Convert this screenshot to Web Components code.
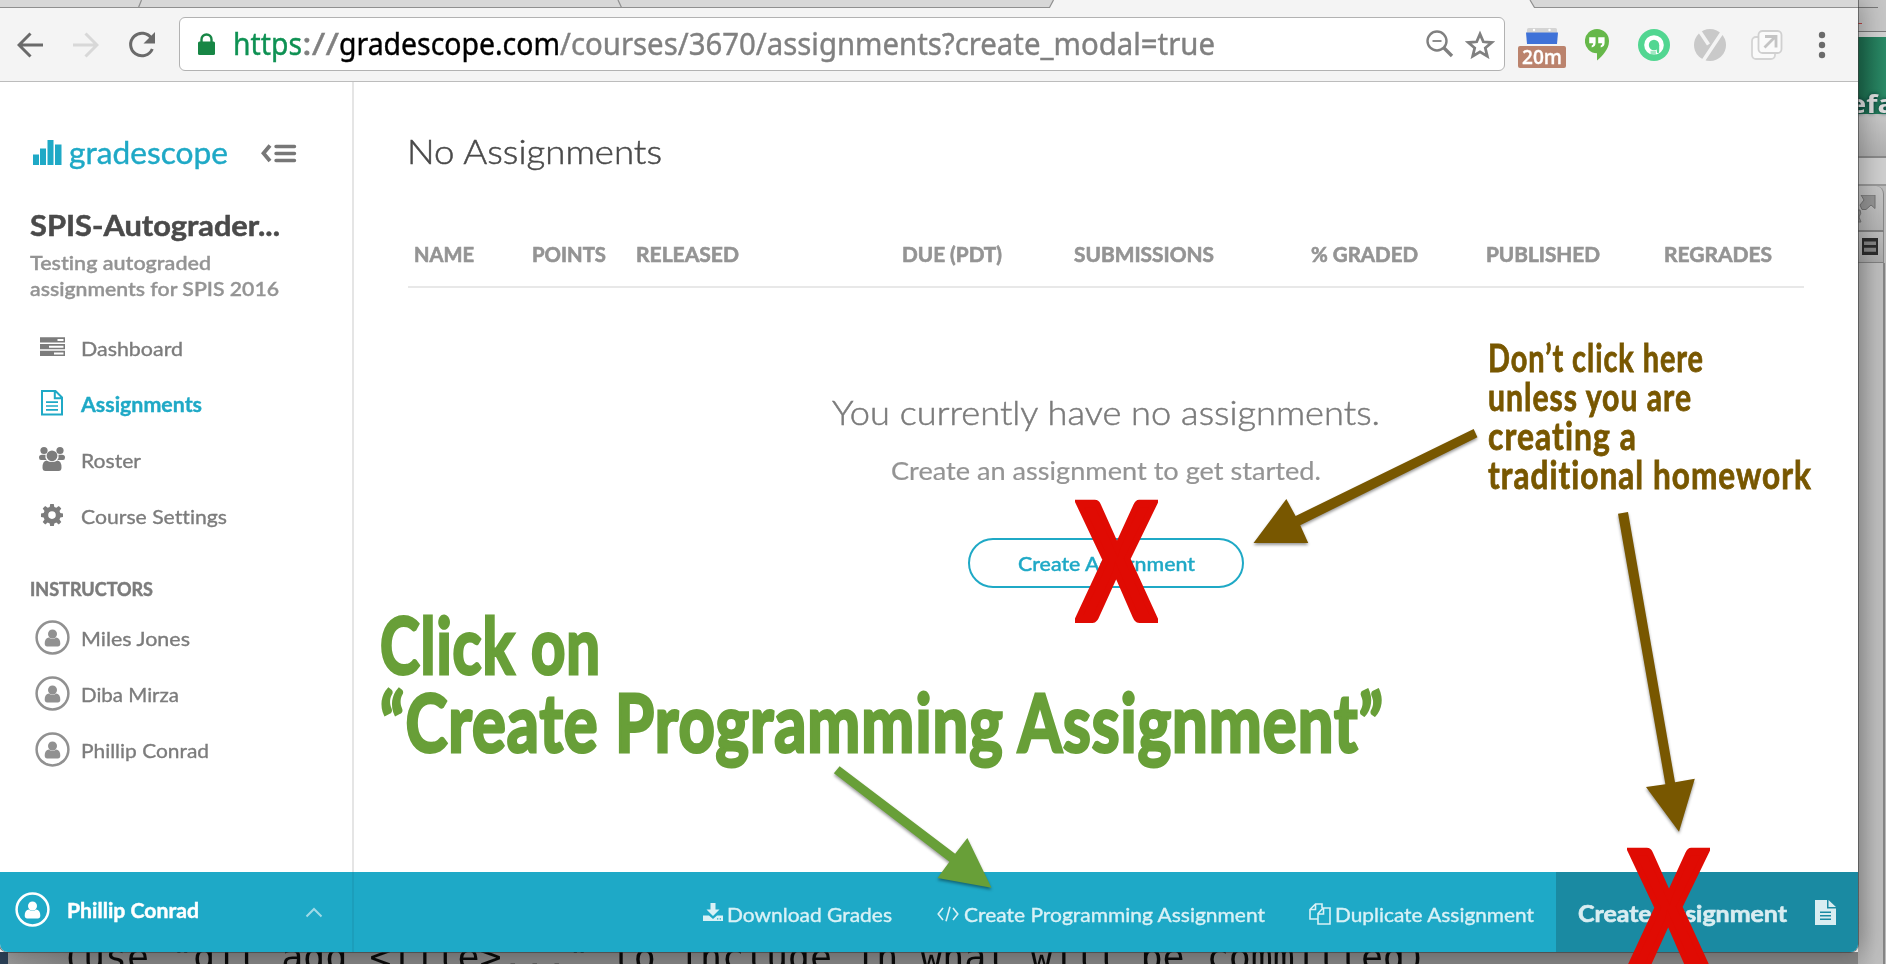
<!DOCTYPE html>
<html lang="en">
<head>
<meta charset="utf-8">
<title>Gradescope – Assignments</title>
<style>
html, body { margin: 0; padding: 0; }
body { font-family: Lato, "Open Sans", sans-serif; overflow: hidden; }
</style>
</head>
<body>
<desk-top></desk-top>
<script>
const define = (name, html, setup) => customElements.define(name, class extends HTMLElement {
  constructor() { super(); this.attachShadow({ mode: 'open' }); }
  connectedCallback() {
    this.shadowRoot.innerHTML = html;
    if (setup) setup.call(this, this.shadowRoot);
  }
});

/* One line of text set to an exact width: w = width, s = font size, b = weight */
define('fit-text', `
<style>
:host { display: flex; flex: none; line-height: 1; white-space: pre; font-variant-ligatures: none; }
span { flex: none; transform-origin: 0 50%; line-height: 1; }
</style><span><slot></slot></span>`, function (root) {
  const span = root.querySelector('span');
  this.style.fontSize = this.getAttribute('s') + 'px';
  this.style.height = this.getAttribute('s') + 'px';
  if (this.hasAttribute('b')) this.style.fontWeight = this.getAttribute('b');
  const w = +this.getAttribute('w');
  const own = span.offsetWidth ? span.getBoundingClientRect().width : w;
  this.style.width = w + 'px';
  span.style.transform = 'scaleX(' + (w / own) + ')';
});

const ICONS = {
  back: [26, 26, '<path d="M13.5 1.5 2 13l11.500 11.500M2 13h24" fill="none" stroke="currentColor" stroke-width="3"/>'],
  forward: [26, 26, '<path d="M12.500 1.500 24 13 12.500 24.500M24 13H0" fill="none" stroke="currentColor" stroke-width="3"/>'],
  reload: [28, 28, '<path d="M23.500 7.500A11.300 11.300 0 1 0 24.300 18" fill="none" stroke="currentColor" stroke-width="3"/><path d="M27 1v11.500H15.500z" fill="currentColor"/>'],
  lock: [17, 22, '<rect x="0" y="8.500" width="17" height="13.500" rx="1.500" fill="currentColor"/><path d="M3.500 10V6.500a5 5 0 0 1 10 0V10" fill="none" stroke="currentColor" stroke-width="2.400"/>'],
  zoomout: [28, 28, '<circle cx="11" cy="11" r="9.500" fill="none" stroke="currentColor" stroke-width="2.400"/><path d="M6.500 11h9" stroke="currentColor" stroke-width="1.800"/><path d="M17.500 17.500l8.500 8.500" stroke="currentColor" stroke-width="3.400"/>'],
  star: [30, 29, '<path d="M15 4l3.300 7.800 8.400.7-6.400 5.500 2 8.200L15 21.800l-7.300 4.400 2-8.200-6.400-5.500 8.400-.7z" fill="none" stroke="currentColor" stroke-width="2.800"/>'],
  hangouts: [24, 32, '<path d="M12 0a12 12 0 0 1 12 12.200c0 8-6.500 14.500-12 19.300v-7.300A12 12 0 0 1 12 0z" fill="#66b84a"/><path d="M4.200 8.300h6.400v5.500q0 4-3.900 4.600v-2q1.500-.5 1.500-2.200H4.200zM13.200 8.300h6.400v5.500q0 4-3.900 4.600v-2q1.500-.5 1.500-2.200h-4z" fill="#fff"/>'],
  ring: [32, 32, '<circle cx="16" cy="16" r="16" fill="#52d691"/><circle cx="16" cy="16" r="9.800" fill="#fff"/><circle cx="16" cy="16" r="5.200" fill="#52d691"/><path d="M18.800 16h2.400v6q0 1.700-1 2.400-1.400-.2-1.400-2.400z" fill="#52d691"/><path d="M12.500 21.800h5.400v4h-5.400z" fill="#52d691" opacity=".55"/>'],
  fork: [32, 32, '<circle cx="16" cy="16" r="16" fill="#c9c9c9"/><path d="M5.500 2l9 13.500M28 3.500 9 32" stroke="#f4f4f4" stroke-width="3.600"/>'],
  share: [32, 30, '<rect x="1" y="7" width="23" height="22" rx="4" fill="#fafafa" stroke="#d4d4d4" stroke-width="1.800"/><rect x="7.500" y="1" width="23" height="22" rx="4" fill="#fafafa" stroke="#d0d0d0" stroke-width="1.800"/><path d="M13.500 17.500 23.500 7.500M14 6.500h11v11" fill="none" stroke="#c4c4c4" stroke-width="2.800"/>'],
  dots: [8, 28, '<g fill="#6a6a6a"><circle cx="4" cy="4" r="3.200"/><circle cx="4" cy="14" r="3.200"/><circle cx="4" cy="24" r="3.200"/></g>'],
  calendar: [32, 17, '<rect x="1" y="0" width="30" height="6" rx="1.500" fill="#d4d4d4"/><circle cx="8" cy="2" r="1.200" fill="#fff"/><circle cx="23.500" cy="2" r="1.200" fill="#fff"/><path d="M0 4.500h32L31 16H1z" fill="#3f72d8"/>'],
  bars: [29, 25, '<path fill="currentColor" d="M0 14.500h6V25H0zM7 8.500h6V25H7zM14.500 0h6v25h-6zM22 4.500h6.500V25H22z"/>'],
  collapse: [36, 20, '<path d="M9 2.500 2.500 10.300 9 18" fill="none" stroke="currentColor" stroke-width="3.800"/><path d="M15 3.500h18.500M15 10.500h18.500M15 17.500h18.500" stroke="currentColor" stroke-width="3.400" stroke-linecap="round"/>'],
  tasks: [25, 19, '<path fill="currentColor" fill-rule="evenodd" d="M0 .2h25v5.300H0zM17.500 2v2h6V2zM0 7h25v5.300H0zM9 8.700v2h14.500v-2zM0 13.700h25v5.300H0zM14 15.500v2h9.500v-2z"/>'],
  fileo: [22, 26, '<path d="M1 1h13.500L21 7.500V24.500H1zM13.800 1v7.200H21" fill="none" stroke="currentColor" stroke-width="2"/><path d="M5 12.200h12M5 16h12M5 19.800h12" stroke="currentColor" stroke-width="1.700"/>'],
  users: [26, 26, '<g fill="currentColor"><circle cx="5" cy="4.500" r="3.600"/><circle cx="21" cy="4.500" r="3.600"/><circle cx="13" cy="9.800" r="5.400"/><path d="M3 8.700h3.500a6.500 6.500 0 0 0 1.200 5.400H2Q0 14 0 11.500 0 8.700 3 8.700zM23 8.700h-3.500a6.500 6.500 0 0 1-1.200 5.400H24q2-.1 2-2.600 0-2.800-3-2.800zM7.500 14.500q5.500 3 11 0 4 .5 4 7 0 3.500-3 3.500h-13q-3 0-3-3.500 0-6.500 4-7z"/></g>'],
  gear: [22, 22, '<path fill="currentColor" fill-rule="evenodd" d="M9.200 0h3.600l.5 3 2 .8 2.500-1.800 2.500 2.500-1.800 2.500.8 2 2.900.5v3.400l-2.900.5-.8 2 1.800 2.500-2.500 2.500-2.500-1.800-2 .8-.5 2.900H9.200l-.5-2.900-2-.8-2.500 1.800-2.500-2.500 1.800-2.500-.8-2L0 12.900V9.500L2.700 9l.8-2-1.800-2.500L4.200 2l2.500 1.800 2-.8zM11 7.300a3.800 3.800 0 1 0 0 7.600 3.800 3.800 0 0 0 0-7.600z"/>'],
  avatar: [35, 35, '<circle cx="17.500" cy="17.500" r="15.900" fill="none" stroke="currentColor" stroke-width="2.500"/><circle cx="17.500" cy="14" r="4.500" fill="currentColor"/><path fill="currentColor" d="M13.500 17.400q4 2.800 8 0 3.800.8 3.800 6 0 3-2.500 3H12.200q-2.500 0-2.500-3 0-5.200 3.800-6z"/>'],
  caret: [18, 11, '<path d="M1.500 9.500 9 2l7.500 7.500" fill="none" stroke="currentColor" stroke-width="2"/>'],
  download: [20, 19, '<path fill="currentColor" fill-rule="evenodd" d="M7.500 0h5v6.500h4L10 13 3.500 6.500h4zM0 12.500h6L10 16l4-3.500h6V18H0zM14 15.300v1.200h1.300v-1.200zM16.700 15.300v1.200H18v-1.200z"/>'],
  code: [22, 16, '<path d="M6 2 1.200 8 6 14M16 2l4.800 6L16 14M13 .8 9 15.200" fill="none" stroke="currentColor" stroke-width="1.600"/>'],
  files: [22, 22, '<path d="M13 5V1H6.500L1 6.500V16h7.500M6.500 1v5.500H1M21 21H9V10.500L14 5h7zM14.500 5v6H9" fill="none" stroke="currentColor" stroke-width="1.600"/>'],
  file: [21, 25, '<path fill="currentColor" fill-rule="evenodd" d="M0 0h12v8.500h9V25H0zM13.500 0 21 7h-7.500zM5 11.500V13h11v-1.500zM5 15v1.500h11V15zM5 18.500V20h11v-1.500z"/>'],
  expand: [22, 32, '<path d="M3 0h14v13.500l-4-3.500-5 4.500H4L2 10l4-5z" fill="#959595" stroke="#747474"/><path d="M-2 15l4 0q2 3-1 7l2 5H-4" fill="#959595" stroke="#747474"/>'],
  list: [16, 17, '<rect width="16" height="17" fill="#2c2c2c"/><path d="M2 3.500h12v3.500H2zM2 9.800h12v4H2z" fill="#858585"/>']
};
customElements.define('ui-icon', class extends HTMLElement {
  constructor() { super(); this.attachShadow({ mode: 'open' }); }
  connectedCallback() {
    const [w, h, body] = ICONS[this.getAttribute('name')];
    this.shadowRoot.innerHTML = `<style>:host{display:block;flex:none;width:${w}px;height:${h}px}svg{display:block}</style>
<svg width="${w}" height="${h}" viewBox="0 0 ${w} ${h}">${body}</svg>`;
  }
});

define('tab-strip', `
<style>
:host { display: block; height: 8px; background: #f4f4f4; }
svg { display: block; }
</style>
<svg width="1858" height="8"><path d="M0 0H1053.500L1049.500 7H0zM1530 0l4.500 7H1858V0z" fill="#d7d7d7"/>
<path d="M0 7.500H1049.500L1053.500 0M1530 0l4.500 7.500H1858M138.500 7.500 141.500 0M618 0l3.500 7.500" fill="none" stroke="#8f8f8f" stroke-width="1.200"/></svg>`);

define('browser-toolbar', `
<style>
:host { display: flex; align-items: center; height: 73px; background: #f4f4f4; border-bottom: 1px solid #bcbcbc; color: #6a6a6a; box-sizing: content-box; }
.nav { display: flex; align-items: center; width: 162px; padding-left: 17px; }
.fwd { color: #d8d8d8; margin-left: 30px; }
.rl { margin-left: 29px; }
.omni { display: flex; align-items: center; box-sizing: border-box; width: 1326px; height: 54px; margin-bottom: 1px; background: #fff; border: 1px solid #b2b2b2; border-radius: 6px; padding: 0 9px 0 18px; font-family: "Noto Sans", sans-serif; color: #808080; }
.lock { color: #178645; margin-right: 18px; }
.omni fit-text { -webkit-text-stroke: .4px currentColor; }
.s { color: #0e9153; } .d { color: #000; }
.z { margin-left: auto; } .st { margin-left: 11px; }
.ext { display: flex; align-items: center; margin-left: 13px; }
.cal { width: 48px; height: 40px; display: flex; flex-direction: column; align-items: center; margin-top: 7px; }
.badge { box-sizing: border-box; width: 48px; height: 22px; margin-top: 1px; border-radius: 2px; background: #bb836d; color: #fff; font-family: "Open Sans", sans-serif; padding: 1px 0 0 4px; -webkit-text-stroke: .3px currentColor; }
</style>
<div class="nav"><ui-icon name="back"></ui-icon><ui-icon class="fwd" name="forward"></ui-icon><ui-icon class="rl" name="reload"></ui-icon></div>
<div class="omni"><ui-icon class="lock" name="lock"></ui-icon>
<fit-text class="s" s="30" w="69">https</fit-text><fit-text s="30" w="37">://</fit-text><fit-text class="d" s="30" w="221">gradescope.com</fit-text><fit-text s="30" w="655">/courses/3670/assignments?create_modal=true</fit-text>
<ui-icon class="z" name="zoomout"></ui-icon><ui-icon class="st" name="star"></ui-icon></div>
<div class="ext"><div class="cal"><ui-icon name="calendar"></ui-icon><div class="badge"><fit-text s="20" w="40" b="600">20m</fit-text></div></div>
<ui-icon name="hangouts" style="margin-left:19px"></ui-icon><ui-icon name="ring" style="margin-left:29px"></ui-icon><ui-icon name="fork" style="margin-left:24px"></ui-icon><ui-icon name="share" style="margin-left:25px"></ui-icon><ui-icon name="dots" style="margin-left:35px"></ui-icon></div>`);

/* Sidebar row: fixed icon column and a label */
define('nav-item', `
<style>
:host { display: flex; align-items: center; height: 56px; color: #7c7c7c; -webkit-text-stroke: .35px currentColor; }
:host([active]) { color: #1fa9c6; }
.i { width: 50px; display: flex; justify-content: center; margin-left: -3px; padding-bottom: 3px; }
.i ui-icon { color: inherit; }
:host([person]) .i { color: #919191; padding-bottom: 1px; }
.t { margin-left: 4px; }
</style><div class="i"></div><div class="t"><slot></slot></div>`, function (root) {
  root.querySelector('.i').innerHTML = `<ui-icon name="${this.getAttribute('icon')}"></ui-icon>`;
});

define('course-sidebar', `
<style>
:host { display: block; box-sizing: border-box; width: 354px; border-right: 2px solid #e5e5e5; padding: 50px 0 0 30px; color: #7c7c7c; }
.logo { display: flex; align-items: center; height: 40px; color: #1fa9c6; -webkit-text-stroke: .4px currentColor; }
.logo ui-icon { margin: 1px 0 0 3px; }
.logo .c { color: #777; margin: 2px 0 0 33px; }
.title { margin-top: 33px; height: 40px; display: flex; align-items: center; color: #4a4a4a; -webkit-text-stroke: .5px currentColor; }
.sub { margin: 4px 0 19px; color: #949494; -webkit-text-stroke: .3px currentColor; }
.sub fit-text { padding: 4px 0 3px; height: 19px !important; }
.h { height: 42px; padding-top: 24px; display: flex; align-items: center; -webkit-text-stroke: .5px currentColor; }
</style>
<div class="logo"><ui-icon name="bars"></ui-icon><fit-text style="margin-left:7px" s="31" w="159">gradescope</fit-text><ui-icon class="c" name="collapse"></ui-icon></div>
<div class="title"><fit-text s="28" w="250" b="700">SPIS-Autograder...</fit-text></div>
<div class="sub"><fit-text s="19" w="181" b="600">Testing autograded</fit-text><fit-text s="19" w="249" b="600">assignments for SPIS 2016</fit-text></div>
<nav-item icon="tasks"><fit-text s="20" w="102">Dashboard</fit-text></nav-item>
<nav-item icon="fileo" active><fit-text s="20" w="121" b="700">Assignments</fit-text></nav-item>
<nav-item icon="users"><fit-text s="20" w="60">Roster</fit-text></nav-item>
<nav-item icon="gear"><fit-text s="20" w="146">Course Settings</fit-text></nav-item>
<div class="h"><fit-text s="18" w="123" b="700">INSTRUCTORS</fit-text></div>
<nav-item person icon="avatar"><fit-text s="20" w="109">Miles Jones</fit-text></nav-item>
<nav-item person icon="avatar"><fit-text s="20" w="98">Diba Mirza</fit-text></nav-item>
<nav-item person icon="avatar"><fit-text s="20" w="128">Phillip Conrad</fit-text></nav-item>`);

define('pill-button', `
<style>:host { display: flex; align-items: center; justify-content: center; box-sizing: border-box; width: 276px; height: 50px; border: 2px solid #1fa9c6; border-radius: 25px; color: #1fa9c6; -webkit-text-stroke: .4px currentColor; padding-bottom: 1px; }</style><slot></slot>`);

define('assignments-page', `
<style>
:host { display: block; flex: 1; padding: 49px 54px 0; }
.h1 { height: 40px; display: flex; align-items: center; color: #4a4a4a; margin-left: -1px; -webkit-text-stroke: .5px currentColor; }
.thead { display: grid; grid-template-columns: 118px 104px 266px 172px 237px 175px 178px 1fr; align-items: center; height: 64px; padding-left: 6px; margin-top: 51px; border-bottom: 2px solid #e8e8e8; color: #949494; -webkit-text-stroke: .6px currentColor; }
.empty { display: flex; flex-direction: column; align-items: center; padding-top: 104px; }
.a { height: 40px; display: flex; align-items: center; color: #7b7b7b; -webkit-text-stroke: .5px currentColor; }
.b { height: 40px; display: flex; align-items: center; color: #949494; margin: 18px 0 48px; -webkit-text-stroke: .2px currentColor; }
</style>
<div class="h1"><fit-text s="34" w="255" b="300">No Assignments</fit-text></div>
<div class="thead"><fit-text s="20" w="60" b="700">NAME</fit-text><fit-text s="20" w="74" b="700">POINTS</fit-text><fit-text s="20" w="103" b="700">RELEASED</fit-text><fit-text s="20" w="100" b="700">DUE (PDT)</fit-text><fit-text s="20" w="140" b="700">SUBMISSIONS</fit-text><fit-text s="20" w="107" b="700">% GRADED</fit-text><fit-text s="20" w="114" b="700">PUBLISHED</fit-text><fit-text s="20" w="108" b="700">REGRADES</fit-text></div>
<div class="empty"><div class="a"><fit-text s="34" w="548" b="300">You currently have no assignments.</fit-text></div>
<div class="b"><fit-text s="25" w="430">Create an assignment to get started.</fit-text></div>
<pill-button><fit-text s="20" w="177" b="500">Create Assignment</fit-text></pill-button></div>`);

define('action-bar', `
<style>
:host { display: flex; height: 80px; background: #1ea9c7; color: #d9f1f6; border-radius: 0 0 8px 8px; overflow: hidden; }
.me { display: flex; align-items: center; box-sizing: border-box; width: 354px; border-right: 2px solid #1c9ebb; padding: 0 29px 5px 15px; color: #fff; -webkit-text-stroke: .4px currentColor; }
.me fit-text { margin-left: 17px; }
.me .c { margin: 5px 0 0 auto; color: #a0dae7; }
.acts { flex: 1; display: flex; align-items: center; justify-content: flex-end; padding: 3px 22px 0 0; -webkit-text-stroke: .35px currentColor; }
.act { display: flex; align-items: center; }
.new { display: flex; align-items: center; box-sizing: border-box; width: 302px; background: #1a8aa2; color: #d9edf1; padding: 3px 22px 0 22px; -webkit-text-stroke: .6px currentColor; }
.new ui-icon { margin-left: auto; margin-bottom: 3px; }
</style>
<div class="me"><ui-icon name="avatar"></ui-icon><fit-text s="20" w="132" b="700">Phillip Conrad</fit-text><ui-icon class="c" name="caret"></ui-icon></div>
<div class="acts">
<div class="act"><ui-icon name="download" style="margin-bottom:2px"></ui-icon><fit-text s="20" w="165" style="margin-left:4px">Download Grades</fit-text></div>
<div class="act" style="margin-left:45px"><ui-icon name="code"></ui-icon><fit-text s="20" w="301" style="margin-left:5px">Create Programming Assignment</fit-text></div>
<div class="act" style="margin-left:44px"><ui-icon name="files"></ui-icon><fit-text s="20" w="199" style="margin-left:4px">Duplicate Assignment</fit-text></div></div>
<div class="new"><fit-text s="22" w="209" b="700">Create Assignment</fit-text><ui-icon name="file"></ui-icon></div>`);

define('browser-window', `
<style>
:host { display: flex; flex-direction: column; width: 1858px; height: 952px; background: #fff; border-radius: 0 0 8px 8px; box-shadow: 0 0 0 1px rgba(60,60,60,.6), 4px 0 26px rgba(0,0,0,.3); position: relative; }
.body { flex: 1; display: flex; }
</style>
<tab-strip></tab-strip><browser-toolbar></browser-toolbar>
<div class="body"><course-sidebar></course-sidebar><assignments-page></assignments-page></div>
<action-bar></action-bar>`);

/* Slice of the windows that show to the right of the browser */
define('side-windows', `
<style>
:host { display: block; width: 28px; height: 964px; overflow: hidden; background: #bcbcbc; }
.a { height: 31px; background: #c6c6c6; border-bottom: 1px solid #777; display: flex; flex-direction: column; justify-content: space-around; }
.a i { display: block; width: 20px; height: 1px; background: #777; }
.a i + i { width: 4px; background: #b44; }
.b { height: 5px; background: #d2d2d2; }
.g { height: 77px; background: linear-gradient(90deg, #1c6a4d, #2b8b67); color: #dcdcdc; font-family: "Open Sans", sans-serif; box-sizing: border-box; padding-top: 54px; text-shadow: 0 0 4px #033; }
.g fit-text { margin-left: -9px; }
.c { height: 42px; background: linear-gradient(#c9c9c9, #b0b0b0); border-bottom: 2px solid #8a8a8a; }
.d { height: 26px; background: #cfcfcf; border-bottom: 2px solid #999; }
.e { height: 46px; width: 26px; background: linear-gradient(#c6c6c6, #b3b3b3); border-right: 1px solid #888; border-bottom: 2px solid #808080; border-radius: 0 8px 0 0; box-sizing: border-box; padding-top: 9px; }
.f { height: 31px; width: 26px; background: linear-gradient(#bdbdbd, #a9a9a9); border-right: 1px solid #888; border-bottom: 1px solid #808080; box-sizing: border-box; padding: 6px 0 0 4px; }
.r { height: 703px; width: 25px; background: linear-gradient(90deg, #b0b0b0, #bebebe 70%); border-right: 2px solid #858585; }
</style>
<div class="a"><i></i><i></i></div><div class="b"></div>
<div class="g"><fit-text s="25" w="46" b="700">efa</fit-text></div>
<div class="c"></div><div class="d"></div>
<div class="e"><ui-icon name="expand"></ui-icon></div>
<div class="f"><ui-icon name="list"></ui-icon></div>
<div class="r"></div>`);

/* Terminal line below the browser */
define('terminal-strip', `
<style>
:host { display: flex; width: 1858px; height: 12px; overflow: hidden; background: #868686; }
.n { width: 8px; background: #2b4056; }
.t { flex: 1; display: flex; align-items: flex-start; background: linear-gradient(90deg, #999, #858585 70px); padding-left: 53px; font-family: "DejaVu Sans Mono", monospace; color: #0a0a0a; }
fit-text { margin-top: -13px; }
</style><div class="n"></div><div class="t"><fit-text s="36" w="1366">(use "git add &lt;file&gt;..." to include in what will be committed)</fit-text></div>`);

/* Hand-drawn notes, arrows and crosses over the page */
define('note-layer', `
<style>
:host { position: absolute; inset: 0; overflow: hidden; }
svg { position: absolute; inset: 0; filter: drop-shadow(0 2px 1.500px rgba(0,0,0,.4)); }
.n { position: absolute; font-weight: 700; -webkit-text-stroke-color: currentColor; stroke-linejoin: round; letter-spacing: .08em; }
.g { left: 380px; top: 605px; color: #689f38; -webkit-text-stroke-width: 3px; }
.g fit-text { margin-bottom: -2px; }
.b { left: 1488px; top: 338px; color: #785700; -webkit-text-stroke-width: .8px; }
.x { color: #e00b03; -webkit-text-stroke-width: 8px; letter-spacing: 0; }
</style>
<div class="n g"><fit-text s="78.500" w="221">Click on</fit-text><fit-text s="79.500" w="1004">“Create Programming Assignment”</fit-text></div>
<div class="n b"><fit-text s="39" w="216">Don’t click here</fit-text><fit-text s="39" w="204">unless you are</fit-text><fit-text s="39" w="149">creating a</fit-text><fit-text s="39" w="324">traditional homework</fit-text></div>
<div class="n x" style="left:1078px;top:477px"><fit-text s="160" w="77">X</fit-text></div>
<div class="n x" style="left:1630px;top:825px"><fit-text s="160" w="77">X</fit-text></div>
<svg width="1886" height="964"><g fill="#785700"><path transform="translate(820 380) scale(.4209 .3333)" d="M1553 147 1562 172 1141 436 1160 489H1030L1108 357 1130 408z"/>
<path d="M1618 513.700 1628 512 1675 782.300 1694.800 778.700 1679 831.700 1646 787 1665.400 784.300z"/></g>
<path fill="#689f38" transform="translate(640 720) scale(.4082 .3333)" d="M489 139 475 160 758 425 729 474 861 503 802 354 772 401z"/></svg>`);

define('desk-top', `
<style>
:host { display: grid; position: relative; width: 1886px; height: 964px; grid-template: 952px 12px / 1858px 28px; overflow: hidden; font-family: Lato, "Open Sans", sans-serif; }
side-windows { grid-area: 1 / 2 / 3 / 3; }
browser-window { grid-area: 1 / 1; z-index: 1; }
terminal-strip { grid-area: 2 / 1; }
note-layer { z-index: 2; }
</style>
<browser-window></browser-window><side-windows></side-windows><terminal-strip></terminal-strip><note-layer></note-layer>`);
</script>
</body>
</html>
